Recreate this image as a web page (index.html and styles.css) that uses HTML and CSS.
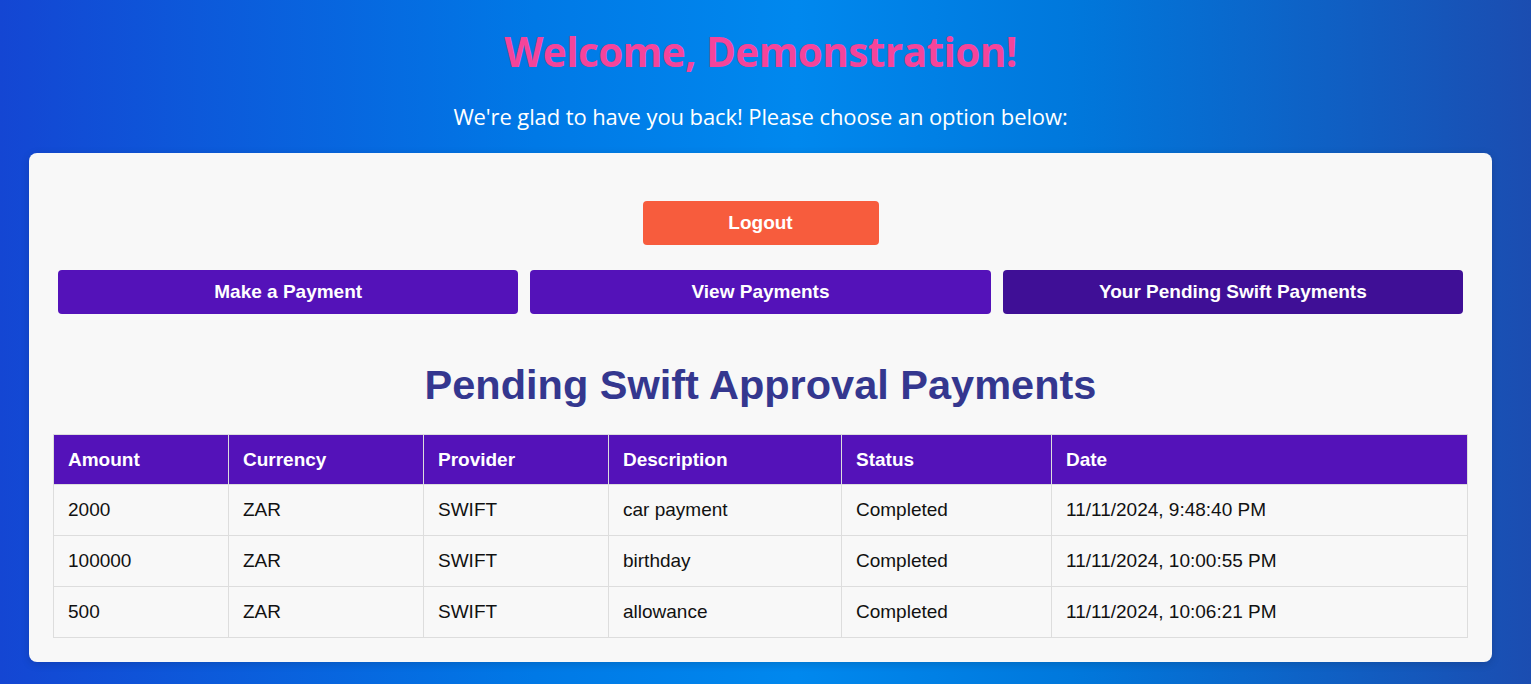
FILE: index.html
```html
<!DOCTYPE html>
<html lang="en">
<head>
<meta charset="utf-8">
<title>Dashboard</title>
<link rel="stylesheet" href="styles.css">
</head>
<body>
<div class="page">
  <h1 class="welcome">Welcome, Demonstration!</h1>
  <p class="subtitle">We're glad to have you back! Please choose an option below:</p>
  <div class="card">
    <div class="logout-row">
      <button class="btn btn-logout">Logout</button>
    </div>
    <div class="nav-row">
      <button class="btn btn-nav">Make a Payment</button>
      <button class="btn btn-nav">View Payments</button>
      <button class="btn btn-nav active">Your Pending Swift Payments</button>
    </div>
    <h2 class="section-title">Pending Swift Approval Payments</h2>
    <table class="payments">
      <thead>
        <tr>
          <th>Amount</th>
          <th>Currency</th>
          <th>Provider</th>
          <th>Description</th>
          <th>Status</th>
          <th>Date</th>
        </tr>
      </thead>
      <tbody>
        <tr>
          <td>2000</td><td>ZAR</td><td>SWIFT</td><td>car payment</td><td>Completed</td><td>11/11/2024, 9:48:40 PM</td>
        </tr>
        <tr>
          <td>100000</td><td>ZAR</td><td>SWIFT</td><td>birthday</td><td>Completed</td><td>11/11/2024, 10:00:55 PM</td>
        </tr>
        <tr>
          <td>500</td><td>ZAR</td><td>SWIFT</td><td>allowance</td><td>Completed</td><td>11/11/2024, 10:06:21 PM</td>
        </tr>
      </tbody>
    </table>
  </div>
</div>
</body>
</html>
```
FILE: styles.css
```css
* { box-sizing: border-box; }

html, body {
  margin: 0;
  padding: 0;
  height: 100%;
}

body {
  background: linear-gradient(to right, #1446d3 0%, #0079e6 35%, #0088ee 52%, #0078dc 70%, #1b4db1 100%);
  font-family: "Liberation Sans", Arial, sans-serif;
  overflow: hidden;
}

.page {
  padding: 0 39px 0 29px;
}

.welcome {
  margin: 0;
  padding-top: 26px;
  text-align: center;
  font-family: "Open Sans", "Noto Sans", sans-serif;
  font-weight: 700;
  font-size: 40.5px;
  line-height: 52px;
  letter-spacing: -0.6px;
  color: #f5449a;
}

.subtitle {
  margin: 23px 0 0 0;
  text-align: center;
  font-family: "Open Sans", "Noto Sans", sans-serif;
  font-size: 22px;
  line-height: 30px;
  letter-spacing: -0.1px;
  color: #ffffff;
}

.card {
  margin-top: 22px;
  background: #f8f8f8;
  border-radius: 8px;
  padding: 24px 24px 24px 24px;
  box-shadow: 0 2px 8px rgba(0, 0, 0, 0.15);
}

.logout-row {
  display: flex;
  justify-content: center;
  padding-top: 24px;
}

.btn {
  border: none;
  color: #ffffff;
  font-family: "Liberation Sans", Arial, sans-serif;
  font-weight: 700;
  font-size: 19px;
  height: 44px;
  border-radius: 4px;
  cursor: pointer;
}

.btn-logout {
  width: 236px;
  background: #f75c3d;
}

.nav-row {
  display: flex;
  gap: 12px;
  margin-top: 25px;
  padding: 0 5px;
}

.btn-nav {
  flex: 1 1 0;
  background: #5412b9;
}

.btn-nav.active {
  background: #3f0f96;
}

.section-title {
  margin: 46px 0 24px 0;
  text-align: center;
  font-family: "Liberation Sans", Arial, sans-serif;
  font-weight: 700;
  font-size: 41.5px;
  line-height: 50px;
  color: #34378f;
}

.payments {
  width: 100%;
  border-collapse: collapse;
  font-size: 19px;
}

.payments th,
.payments td {
  border: 1px solid #dddddd;
  text-align: left;
  padding: 0 14px;
}

.payments th {
  background: #5412b9;
  color: #ffffff;
  font-weight: 700;
  height: 50px;
}

.payments td {
  color: #111111;
  height: 51px;
  background: #f8f8f8;
}

.payments th:nth-child(1) { width: 175px; }
.payments th:nth-child(2) { width: 195px; }
.payments th:nth-child(3) { width: 185px; }
.payments th:nth-child(4) { width: 233px; }
.payments th:nth-child(5) { width: 210px; }
```
